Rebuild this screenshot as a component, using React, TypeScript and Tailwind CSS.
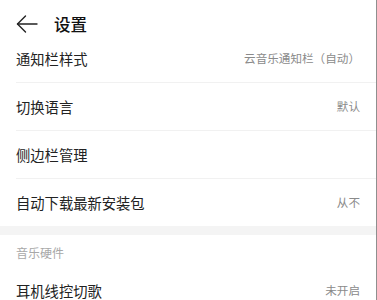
import React from "react";

const font = { fontFamily: '"Noto Sans CJK SC", "Noto Sans", sans-serif' };

function Row({ label, value, border = true }: { label: string; value?: string; border?: boolean }) {
  return (
    <div className="pl-[16px]">
      <div
        className={`h-[47px] flex items-center justify-between pr-[16px] ${border ? "border-b border-[#f1f1f1]" : ""} box-content`}
      >
        <span className="text-[14.3px] text-[#222]">{label}</span>
        {value && <span className="text-[11.6px] text-[#8a8a8a]">{value}</span>}
      </div>
    </div>
  );
}

export default function App() {
  return (
    <div className="w-[377px] h-[300px] overflow-hidden bg-white border-r border-[#8f8f8f]" style={font}>
      <div className="h-[35px] pt-[13px]">
        <div className="flex items-center h-[22px] pl-[16px]">
          <svg width="22" height="18" viewBox="0 0 22 18" fill="none" stroke="#222" strokeWidth="1.4" strokeLinecap="round" strokeLinejoin="round">
            <path d="M21 9H1.5" />
            <path d="M9.5 1L1.5 9l8 8" />
          </svg>
          <span className="ml-[16px] text-[16.5px] font-medium text-[#111]">设置</span>
        </div>
      </div>
      <Row label="通知栏样式" value="云音乐通知栏（自动）" />
      <Row label="切换语言" value="默认" />
      <Row label="侧边栏管理" />
      <Row label="自动下载最新安装包" value="从不" border={false} />
      <div className="h-[9px] bg-[#f4f4f4]" />
      <div className="h-[36px] flex items-center pl-[16px]">
        <span className="text-[12px] text-[#a8a8a8]">音乐硬件</span>
      </div>
      <div className="h-[40px] flex items-center justify-between pl-[16px] pr-[16px]">
        <span className="text-[14.3px] text-[#222]">耳机线控切歌</span>
        <span className="text-[11.6px] text-[#8a8a8a]">未开启</span>
      </div>
    </div>
  );
}
